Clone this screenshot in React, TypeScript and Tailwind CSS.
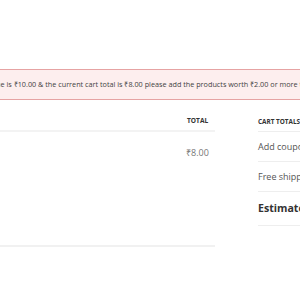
export default function App() {
  return (
    <div className="w-[300px] h-[300px] overflow-hidden bg-white" style={{ fontFamily: '"Open Sans", sans-serif' }}>
      <div className="h-[69px]" />
      <div className="w-[300px] h-[31px] border-y border-[#e6a3a3] bg-[#fdeeee] flex items-center overflow-hidden">
        <div className="whitespace-nowrap text-[7.25px] text-[#3f3f3f] ml-[-83px] shrink-0">
          The minimum order value is ₹10.00 &amp; the current cart total is ₹8.00 please add the products worth ₹2.00 or more to proceed.
        </div>
      </div>
      <div className="h-[12px]" />
      <div className="flex w-[600px]">
        <div className="w-[215px] shrink-0">
          <div className="h-[20px] flex items-center border-b-2 border-[#f3f3f3]">
            <div className="flex-1" />
            <div className="w-[28px] text-[6.6px] font-bold text-[#333]">TOTAL</div>
          </div>
          <div className="h-[115px] border-b-2 border-[#f1f1f1] flex">
            <div className="flex-1" />
            <div className="w-[29px] pt-[14px] text-[9px] text-[#777]">₹8.00</div>
          </div>
        </div>
        <div className="w-[43px] shrink-0" />
        <div className="w-[200px] shrink-0">
          <div className="h-[20px] flex items-center border-b border-[#eeeeee] text-[6.4px] font-bold text-[#333]">CART TOTALS</div>
          <div className="h-[30px] flex items-center border-b border-[#eeeeee] text-[9px] text-[#555]">Add coupons</div>
          <div className="h-[30px] flex items-center border-b border-[#eeeeee] text-[9px] text-[#555]">Free shipping</div>
          <div className="h-[34px] flex items-center border-b border-[#eeeeee] text-[10.6px] font-bold text-[#333]">Estimated total</div>
        </div>
      </div>
    </div>
  );
}
